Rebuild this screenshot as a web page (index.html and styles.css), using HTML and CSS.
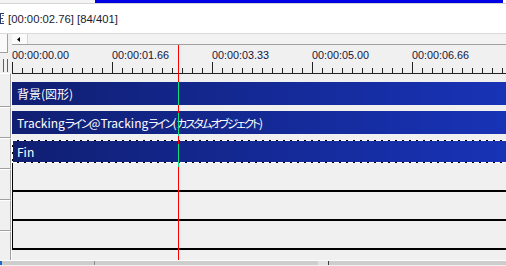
FILE: index.html
```html
<!DOCTYPE html>
<html lang="ja">

<head>
    <meta charset="UTF-8">
    <meta name="viewport" content="width=device-width, initial-scale=1.0">
    <title>拡張編集</title>
    <link rel="stylesheet" href="styles.css">
</head>

<body>
    <div class="titlebar">
        <div class="tb-left"></div>
        <div class="tb-blue"></div>
    </div>

    <div class="status">
        <svg class="status-icon" width="4" height="11" viewBox="0 0 4 11">
            <rect x="0" y="0" width="1" height="11" fill="#2a3a6a"/>
            <rect x="0" y="0" width="4" height="1" fill="#2a3a6a"/>
            <rect x="0" y="5" width="3" height="1" fill="#2a3a6a"/>
            <rect x="0" y="10" width="4" height="1" fill="#2a3a6a"/>
            <rect x="2" y="2" width="2" height="1" fill="#6a7aa0"/>
            <rect x="2" y="8" width="2" height="1" fill="#6a7aa0"/>
        </svg>
        <span>[00:00:02.76] [84/401]</span>
    </div>

    <div class="main">
        <div class="layers">
            <div class="corner"></div>
            <div class="grip"><i></i><i></i></div>
            <div class="layer-head first"></div>
            <div class="layer-head"></div>
            <div class="layer-head"></div>
            <div class="layer-head"></div>
            <div class="layer-head"></div>
            <div class="layer-head"></div>
        </div>

        <div class="timeline">
            <div class="hscroll">
                <div class="arrow-btn">
                    <svg width="3" height="5" viewBox="0 0 3 5"><path d="M3 0 L0 2.5 L3 5 Z" fill="#000"/></svg>
                </div>
                <div class="track"></div>
            </div>

            <div class="ruler">
                <div class="labels">
                    <span>00:00:00.00</span>
                    <span>00:00:01.66</span>
                    <span>00:00:03.33</span>
                    <span>00:00:05.00</span>
                    <span>00:00:06.66</span>
                </div>
                <div class="ticks"></div>
            </div>

            <div class="row"><div class="obj">背景(図形)</div></div>
            <div class="row"><div class="obj">Tracking<span class="kana">ライン</span>@Tracking<span class="kana">ライン</span>(<span class="kana">カスタムオブジェクト</span>)</div></div>
            <div class="row"><div class="obj selected">Fin</div></div>
            <div class="row empty"></div>
            <div class="row empty"></div>
            <div class="row empty"></div>

            <div class="playhead"></div>
        </div>
    </div>

    <div class="bottombar">
        <div class="bb-blue"></div>
        <div class="bb-left"></div>
        <div class="bb-mid"></div>
        <div class="bb-thumb"></div>
        <div class="bb-rest"></div>
    </div>
</body>

</html>
```

FILE: styles.css
```css
body {
    margin: 0;
    width: 506px;
    height: 266px;
    overflow: hidden;
    background-color: #f0f0f0;
    font-family: "Liberation Sans", Arial, sans-serif;
}

.titlebar {
    display: flex;
    height: 3px;
    background-color: #fff;
    border-bottom: 1px solid #d4d4d4;
}

.tb-left {
    width: 95px;
    background-color: #f4f4f4;
}

.tb-blue {
    width: 408px;
    background-color: #0000e4;
}

.status {
    height: 29px;
    display: flex;
    align-items: center;
    gap: 4px;
    background-color: #fff;
    border-bottom: 1px solid #dadada;
    font-size: 11.3px;
    color: #1c1c30;
}

.status-icon {
    flex: none;
}

.main {
    display: flex;
    height: 226px;
}

/* layer headers on the left */
.layers {
    width: 12px;
    flex: none;
    display: flex;
    flex-direction: column;
    overflow: hidden;
}

.corner {
    flex: none;
    width: 7px;
    height: 18px;
    background-color: #fafafa;
    border-right: 1px solid #a0a0a0;
    border-bottom: 1px solid #a0a0a0;
}

.grip {
    flex: none;
    height: 13px;
    margin-top: 6px;
    padding-left: 3px;
    display: flex;
    gap: 3px;
}

.grip i {
    width: 1px;
    background-color: #506080;
}

.layer-head {
    flex: none;
    width: 10px;
    height: 29px;
    background-color: #f0f0f0;
    border-top: 1px solid #fff;
    border-right: 1px solid #a0a0a0;
    border-bottom: 1px solid #a0a0a0;
    box-shadow: 1px 0 0 #fff;
}

.layer-head.first {
    height: 32px;
    margin-top: 1px;
}

/* timeline */
.timeline {
    flex: 1;
    position: relative;
    display: flex;
    flex-direction: column;
    overflow: hidden;
}

.hscroll {
    flex: none;
    height: 10px;
    display: flex;
    border-bottom: 1px solid #a0a0a0;
}

.arrow-btn {
    width: 16px;
    display: flex;
    align-items: center;
    padding-left: 5px;
    box-sizing: border-box;
    background-color: #fbfbfb;
    border-right: 1px solid #d6d6d6;
}

.track {
    flex: 1;
    background-color: #f2f2f2;
}

.ruler {
    flex: none;
    height: 31px;
}

.labels {
    display: flex;
    padding-top: 4px;
    height: 12px;
    font-size: 10.8px;
    line-height: 12px;
    color: #14143a;
    white-space: nowrap;
}

.labels span {
    flex: none;
    width: 100px;
}

.ticks {
    margin-top: 1px;
    height: 12px;
    background:
        linear-gradient(#222, #222) left bottom / 100% 1px no-repeat,
        repeating-linear-gradient(to right, #222 0 1px, transparent 1px 100px) left top / 100% 100% no-repeat,
        repeating-linear-gradient(to right, #222 0 1px, transparent 1px 10px) left bottom / 100% 6px no-repeat;
}

.row {
    flex: none;
    height: 29px;
    box-sizing: border-box;
    padding-top: 6px;
    border-bottom: 2px solid #000;
}

.row.empty {
    border-left: 1px solid #000;
}

.obj {
    position: relative;
    height: 23px;
    padding-left: 5px;
    background: linear-gradient(to right, #101f72, #1833b6);
    color: #fff;
    font-family: "Noto Sans CJK JP", "Noto Sans", sans-serif;
    font-size: 12px;
    line-height: 23px;
    font-feature-settings: "palt";
    white-space: nowrap;
}

.kana {
    font-size: 11.5px;
    letter-spacing: -2px;
}

.obj.selected::after {
    content: "";
    position: absolute;
    inset: 0;
    background:
        repeating-linear-gradient(to right, #fff 0 5px, #000 5px 7px) left top / 100% 1px no-repeat,
        repeating-linear-gradient(to right, #fff 0 5px, #000 5px 7px) left bottom / 100% 1px no-repeat,
        repeating-linear-gradient(to bottom, #fff 0 5px, #000 5px 7px) left top / 1px 100% no-repeat;
}

.playhead {
    position: absolute;
    left: 166px;
    top: 11px;
    bottom: 0;
    width: 1px;
    background: linear-gradient(to bottom,
        #ff0000 0 37px, #10e080 37px 60px,
        #ff0000 60px 68px, #10e080 68px 91px,
        #ff0000 91px 99px, #10e080 99px 122px,
        #ff0000 122px);
}

.bottombar {
    display: flex;
    height: 4px;
    border-top: 1px solid #fcfcfc;
    background-color: #cdcdcd;
}

.bb-blue {
    width: 2px;
    background-color: #1a6ac8;
}

.bb-left {
    width: 92px;
    border-right: 1px solid #8a8a8a;
}

.bb-mid {
    width: 223px;
}

.bb-thumb {
    width: 10px;
    background-color: #e2e2e2;
    border-right: 1px solid #404040;
}

.bb-rest {
    flex: 1;
}
```
